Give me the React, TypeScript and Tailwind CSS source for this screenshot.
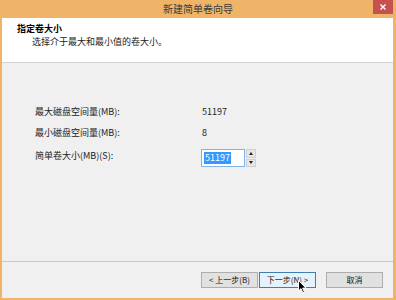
const font = "font-['Microsoft_YaHei','Noto_Sans_CJK_SC',sans-serif]";

const WizardButton = ({
  label,
  active,
}: {
  label: string;
  active?: boolean;
}) => {
  return (
    <div
      className={`w-[57px] h-[16px] flex items-center justify-center text-[8px] leading-none border ${
        active
          ? "border-[#3c7fb1] bg-[#e5f1fb]"
          : "border-[#adadad] bg-[#e1e1e1]"
      } text-[#111]`}
    >
      {label}
    </div>
  );
};

export default function App() {
  return (
    <div
      className={`${font} w-[396px] h-[300px] bg-[#efb468] flex flex-col overflow-hidden`}
    >
      {/* title bar */}
      <div className="relative h-[18px] flex items-center justify-center">
        <span className="text-[10px] leading-none text-[#3a3a3a] -mt-[1px]">
          新建简单卷向导
        </span>
        <div className="absolute right-[3px] top-0 w-[20px] h-[14px] bg-[#c75050] flex items-center justify-center">
          <svg width="6" height="6" viewBox="0 0 6 6">
            <path
              d="M0.5 0.5 L5.5 5.5 M5.5 0.5 L0.5 5.5"
              stroke="#fff"
              strokeWidth="1.4"
            />
          </svg>
        </div>
      </div>

      <div className="flex-1 ml-[2px] mr-[3px] mb-[2px] bg-[#f0f0f0] flex flex-col">
        {/* header */}
        <div className="h-[45px] bg-white border-b border-[#d4d4d4] pt-[4px] pl-[15px]">
          <div className="text-[9px] leading-[13px] font-bold text-black">
            指定卷大小
          </div>
          <div className="text-[9px] leading-[13px] text-[#222] pl-[15px]">
            选择介于最大和最小值的卷大小。
          </div>
        </div>

        {/* body */}
        <div className="flex-1 pt-[42px] pl-[33px] text-[9px] text-[#222]">
          <div className="flex h-[14px] items-center">
            <span className="w-[167px]">最大磁盘空间量(MB):</span>
            <span>51197</span>
          </div>
          <div className="flex h-[14px] items-center mt-[7px]">
            <span className="w-[167px]">最小磁盘空间量(MB):</span>
            <span>8</span>
          </div>
          <div className="flex h-[18px] items-start mt-[9px]">
            <span className="w-[166px] leading-[12px] mt-[1px]">
              简单卷大小(MB)(S):
            </span>
            <div className="w-[44px] h-[18px] border border-[#7eb4ea] bg-white flex items-center pl-[2px]">
              <span className="bg-[#3399ff] text-white leading-[12px] px-[1px]">
                51197
              </span>
            </div>
            <div className="ml-[1px] w-[10px] h-[18px] flex flex-col gap-[1px]">
              <div className="flex-1 bg-[#e6e6e6] border border-[#d0d0d0] flex items-center justify-center">
                <svg width="4" height="3" viewBox="0 0 4 3">
                  <path d="M2 0 L4 3 L0 3 Z" fill="#222" />
                </svg>
              </div>
              <div className="flex-1 bg-[#e6e6e6] border border-[#d0d0d0] flex items-center justify-center">
                <svg width="4" height="3" viewBox="0 0 4 3">
                  <path d="M0 0 L4 0 L2 3 Z" fill="#222" />
                </svg>
              </div>
            </div>
          </div>
        </div>

        {/* footer */}
        <div className="border-t border-[#c9c9c9] h-[37px] flex items-start pt-[10px] pl-[199px] relative">
          <WizardButton label="< 上一步(B)" />
          <div className="ml-[1px]">
            <WizardButton label="下一步(N) >" active />
          </div>
          <div className="ml-[10px]">
            <WizardButton label="取消" />
          </div>
          <svg
            className="absolute left-[296px] top-[18px]"
            width="9"
            height="14"
            viewBox="0 0 9 14"
          >
            <path
              d="M0.5 0.5 L0.5 11 L3 8.6 L4.8 12.8 L6.4 12.1 L4.7 8.1 L8 8.1 Z"
              fill="#000"
              stroke="#fff"
              strokeWidth="1"
              strokeLinejoin="round"
            />
          </svg>
        </div>
      </div>
    </div>
  );
}
